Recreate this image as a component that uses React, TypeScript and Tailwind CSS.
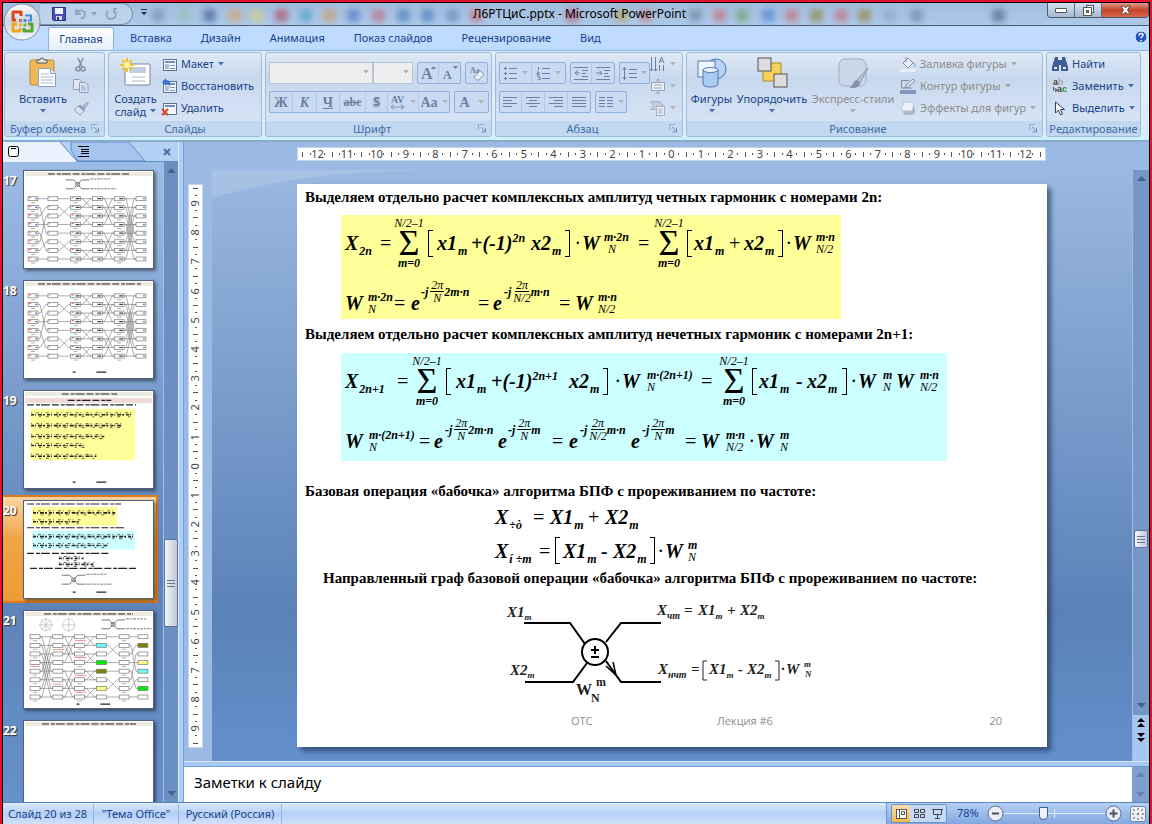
import type { ReactNode } from 'react';

const menuTabs = ['Вставка', 'Дизайн', 'Анимация', 'Показ слайдов', 'Рецензирование', 'Вид'];

function Caret({ className = 'text-[#4a6fae]' }: { className?: string }) {
  return (
    <svg width="6" height="4" viewBox="0 0 6 4" className={`shrink-0 ${className}`} aria-hidden="true">
      <path d="M0 0h6L3 3.5z" fill="currentColor" />
    </svg>
  );
}

/* ---------- ribbon ---------- */

function Group({ title, className, launcher, children }: { title: string; className: string; launcher?: boolean; children: ReactNode }) {
  return (
    <section
      className={`flex flex-col rounded-[3px] border border-[#9dbbdb] bg-linear-to-b from-[#dfe9f6] via-[#c8d8ed] via-30% to-[#dae7f7] overflow-hidden ${className}`}
    >
      <div className="flex h-[68px]">{children}</div>
      <div className="flex flex-1 items-center bg-[#c1d8f0] text-[#3e6aaa]">
        <h2 className="flex-1 text-center whitespace-nowrap leading-none">{title}</h2>
        {launcher && (
          <button aria-label={`${title}: параметры`} className="mr-1">
            <svg width="9" height="9" viewBox="0 0 9 9" fill="none" stroke="#8fabcf">
              <path d="M.5 6V.5H6" />
              <path d="M3 3l4 4M7.5 4v4h-4" stroke="#6d8ebb" />
            </svg>
          </button>
        )}
      </div>
    </section>
  );
}

function SmallButton({ icon, label, caret, disabled }: { icon: ReactNode; label: string; caret?: boolean; disabled?: boolean }) {
  return (
    <button
      disabled={disabled}
      className={`flex h-[22px] items-center gap-1 whitespace-nowrap ${disabled ? 'text-[#8d8d8d]' : 'text-[#15428b]'}`}
    >
      {icon}
      {label}
      {caret && <Caret className={disabled ? 'text-[#a9a9a9]' : 'text-[#4a6fae]'} />}
    </button>
  );
}

function BigButton({ icon, label, second, disabled, className = '' }: { icon: ReactNode; label: string; second?: string; disabled?: boolean; className?: string }) {
  return (
    <button
      disabled={disabled}
      className={`flex flex-col items-center whitespace-nowrap leading-[13px] ${disabled ? 'text-[#8d8d8d]' : 'text-[#15428b]'} ${className}`}
    >
      <span className="flex h-[39px] items-center">{icon}</span>
      {label}
      <span className="flex h-3 items-center gap-1">
        {second}
        <Caret className={disabled ? 'text-[#a9a9a9]' : 'text-[#4a6fae]'} />
      </span>
    </button>
  );
}

function ButtonStrip({ children, className = '' }: { children: ReactNode; className?: string }) {
  return (
    <div className={`flex h-[22px] divide-x divide-[#b4c9e6] rounded-[2px] border border-[#8fb0da] bg-[#c9dbf2] ${className}`}>{children}</div>
  );
}

function Tool({ children, label, className }: { children: ReactNode; label: string; className: string }) {
  return (
    <button aria-label={label} disabled className={`flex items-center justify-center gap-1 text-[#6d7ea3] ${className}`}>
      {children}
    </button>
  );
}

function ClipboardGroup() {
  return (
    <Group title="Буфер обмена" launcher className="w-[101px]">
      <BigButton
        className="w-[76px]"
        label="Вставить"
        icon={
          <svg width="28" height="32" viewBox="0 0 28 32">
            <rect x="1" y="3" width="24" height="25" rx="2" fill="#efb957" stroke="#b98a3c" />
            <path d="M8 6V3h3a2 2 0 0 1 4 0h3v3z" fill="#e8e8e8" stroke="#555" />
            <path d="M9.5 11.5h12l5 5v13h-17z" fill="#fff" stroke="#8ba0c0" />
            <path d="M21.5 11.5v5h5" fill="#dce6f4" stroke="#8ba0c0" />
            <path d="M12 17h8M12 20h12M12 23h12M12 26h12" stroke="#a9b7ce" />
          </svg>
        }
      />
      <div className="-ml-2 flex flex-col">
        <Tool label="Вырезать" className="h-[22px]">
          <svg width="14" height="15" viewBox="0 0 14 15" fill="none" stroke="#8492ae" strokeWidth="1.6">
            <path d="M4 1l4 9M9 1L5 10" />
            <circle cx="4" cy="12" r="2" />
            <circle cx="9" cy="12" r="2" />
          </svg>
        </Tool>
        <Tool label="Копировать" className="h-[22px]">
          <svg width="16" height="14" viewBox="0 0 16 14" fill="#dfe7f3" stroke="#8e9dbb">
            <path d="M.5.5h6l2 2v8h-8z" />
            <path d="M6.5 3.5h6l2.5 2.5v7.5H6.5z" />
            <path d="M8 7h4M8 9h5M8 11h5" />
          </svg>
        </Tool>
        <Tool label="Формат по образцу" className="h-[22px]">
          <svg width="16" height="15" viewBox="0 0 16 15" stroke="#98a5bf">
            <path d="M10 5l4-4 1.5 1.5L12 7z" fill="#b5c0d4" />
            <path d="M7 4l5 4-1 2-6-4z" fill="#8e9bb5" />
            <path d="M5 5l6 5-4 4-6-5z" fill="#dbe2ed" />
          </svg>
        </Tool>
      </div>
    </Group>
  );
}

function LayoutIcon({ kind }: { kind: 'layout' | 'reset' | 'delete' }) {
  return (
    <svg width="15" height="15" viewBox="0 0 15 15" className="shrink-0 overflow-visible">
      <rect x="1.5" y="2.5" width="13" height="11" fill="#f4f8fd" stroke="#5d7299" />
      <path d="M3 5h10" stroke="#6f8fc0" strokeWidth="2" />
      {kind !== 'delete' && <rect x="3" y="7" width="4" height="5" fill="#a9bedd" />}
      {kind !== 'delete' && <path d="M8 8.5h5M8 11.5h5" stroke="#7d93b8" />}
      {kind === 'reset' && <path d="M0 3l4-4v2c4 0 5 3 4 7-1-3-2-3-4-3v2z" fill="#3a72d0" />}
      {kind === 'delete' && <path d="M0 8l6 6M6 8l-6 6" stroke="#e5462c" strokeWidth="2.2" />}
    </svg>
  );
}

function SlidesGroup() {
  return (
    <Group title="Слайды" className="w-[154px]">
      <BigButton
        className="w-[53px]"
        label="Создать"
        second="слайд"
        icon={
          <svg width="32" height="30" viewBox="0 0 32 30">
            <rect x="5" y="6" width="25" height="21" rx="1" fill="#fff" stroke="#7489aa" />
            <rect x="9" y="9" width="17" height="6" fill="#c3cee0" />
            <path d="M12 19h13M12 23h13" stroke="#a9b6cb" />
            <path d="M7 0v14M0 7h14M2 2l10 10M12 2L2 12" stroke="#f2c21d" strokeWidth="2" />
            <circle cx="7" cy="7" r="3" fill="#fff7b0" />
          </svg>
        }
      />
      <div className="flex flex-col">
        <SmallButton icon={<LayoutIcon kind="layout" />} label="Макет" caret />
        <SmallButton icon={<LayoutIcon kind="reset" />} label="Восстановить" />
        <SmallButton icon={<LayoutIcon kind="delete" />} label="Удалить" />
      </div>
    </Group>
  );
}

function FontBox({ label, className }: { label: string; className: string }) {
  return (
    <div className={`relative h-[22px] ${className}`}>
      <select aria-label={label} disabled className="h-full w-full appearance-none border border-[#b3c4da] bg-[#eeeeee]" />
      <span className="absolute right-1 top-2 flex">
        <Caret className="text-[#b3b3b3]" />
      </span>
    </div>
  );
}

function SizeIcon({ up }: { up?: boolean }) {
  return (
    <svg width="16" height="16" viewBox="0 0 16 16" fill="#6d7ea3" fontFamily="Liberation Serif" fontWeight="bold">
      <text x="1" y="14" fontSize={up ? 16 : 12}>A</text>
      <path d={up ? 'M11 4h5l-2.500-3z' : 'M11 1h5l-2.500 3z'} />
    </svg>
  );
}

function FontGroup() {
  return (
    <Group title="Шрифт" launcher className="w-[227px]">
      <div className="flex flex-col gap-[7px] px-[3px] pt-[9px]">
        <div className="flex">
          <FontBox label="Гарнитура" className="w-[104px]" />
          <FontBox label="Размер шрифта" className="w-[40px]" />
          <ButtonStrip className="ml-1">
            <Tool label="Увеличить размер" className="w-[21px]"><SizeIcon up /></Tool>
            <Tool label="Уменьшить размер" className="w-[21px]"><SizeIcon /></Tool>
          </ButtonStrip>
          <ButtonStrip className="ml-1">
            <Tool label="Очистить формат" className="w-[21px]">
              <svg width="16" height="16" viewBox="0 0 16 16">
                <text x="1" y="8" fontSize="8" fontWeight="bold" fill="#6d7ea3" fontFamily="Liberation Serif">Aa</text>
                <path d="M5 12l6-6 4 3-5 6H7z" fill="#e7ebf3" stroke="#8f9cb7" />
              </svg>
            </Tool>
          </ButtonStrip>
        </div>
        <div className="flex gap-1 font-['Liberation_Serif'] text-[14px] font-bold">
          <ButtonStrip>
            <Tool label="Полужирный" className="w-[23px]">Ж</Tool>
            <Tool label="Курсив" className="w-[24px] italic">К</Tool>
            <Tool label="Подчеркнутый" className="w-[23px] underline">Ч</Tool>
            <Tool label="Зачеркнутый" className="w-[26px] text-[12px] line-through">abc</Tool>
            <Tool label="Тень" className="w-[22px] font-['Noto_Sans'] text-[13px] text-shadow-md">S</Tool>
            <Tool label="Интервал" className="w-[31px]">
              <svg width="16" height="15" viewBox="0 0 16 15">
                <text x="1" y="8" fontSize="10" fill="#6d7ea3" fontFamily="Liberation Serif">AV</text>
                <path d="M1 12h13M4 9.5L1 12l3 2.5M11 9.5l3 2.5-3 2.5" stroke="#7f90b3" fill="none" />
              </svg>
              <Caret className="text-[#b3b3b3]" />
            </Tool>
            <Tool label="Регистр" className="w-[30px]">Aa<Caret className="text-[#b3b3b3]" /></Tool>
          </ButtonStrip>
          <ButtonStrip>
            <Tool label="Цвет текста" className="w-[33px]">
              <span className="pr-1">A</span>
              <Caret className="text-[#b3b3b3]" />
            </Tool>
          </ButtonStrip>
        </div>
      </div>
    </Group>
  );
}

function Lines({ d }: { d: string }) {
  return (
    <svg width="15" height="13" viewBox="0 0 15 13" fill="none" stroke="#6d7ea3" aria-hidden="true">
      <path d={d} />
    </svg>
  );
}

function ParagraphGroup() {
  return (
    <Group title="Абзац" launcher className="w-[188px]">
      <div className="flex flex-col gap-[7px] pl-[3px] pt-[9px]">
        <div className="flex gap-1">
          <ButtonStrip>
            <Tool label="Маркеры" className="w-[32px]">
              <Lines d="M1 1.500h3M1 6.500h3M1 11.500h3M6 1.500h8M6 6.500h8M6 11.500h8M2.500 0v3M2.500 5v3M2.500 10v3" />
              <Caret className="text-[#b3b3b3]" />
            </Tool>
            <Tool label="Нумерация" className="w-[33px]">
              <Lines d="M2.500 0v3M1 5h2v1.500H1V8h3M1 10h3v3H1M6 1.500h8M6 6.500h8M6 11.500h8" />
              <Caret className="text-[#b3b3b3]" />
            </Tool>
          </ButtonStrip>
          <ButtonStrip>
            <Tool label="Уменьшить отступ" className="w-[21px]">
              <Lines d="M0 .5h14M8 3.500h6M8 6.500h4M8 9.500h6M0 12.500h14M6 6H1M3.500 3.500L1 6l2.500 2.500" />
            </Tool>
            <Tool label="Увеличить отступ" className="w-[22px]">
              <Lines d="M0 .5h14M8 3.500h6M8 6.500h4M8 9.500h6M0 12.500h14M0 6h6M3.500 3.500L6 6 3.500 8.500" />
            </Tool>
          </ButtonStrip>
          <ButtonStrip>
            <Tool label="Междустрочный интервал" className="w-[29px]">
              <Lines d="M2.500 0v13M.5 3l2-2.500 2 2.500M.5 10l2 2.500 2-2.500M7 2.500h8M7 6.500h8M7 10.500h8" />
              <Caret className="text-[#b3b3b3]" />
            </Tool>
          </ButtonStrip>
        </div>
        <div className="flex gap-1">
          <ButtonStrip>
            <Tool label="По левому краю" className="w-[22px]"><Lines d="M0 1.500h14M0 4.500h9M0 7.500h14M0 10.500h9" /></Tool>
            <Tool label="По центру" className="w-[23px]"><Lines d="M0 1.500h14M3 4.500h8M0 7.500h14M3 10.500h8" /></Tool>
            <Tool label="По правому краю" className="w-[23px]"><Lines d="M0 1.500h14M5 4.500h9M0 7.500h14M5 10.500h9" /></Tool>
            <Tool label="По ширине" className="w-[22px]"><Lines d="M0 1.500h14M0 4.500h14M0 7.500h14M0 10.500h14" /></Tool>
          </ButtonStrip>
          <ButtonStrip>
            <Tool label="Колонки" className="w-[30px]">
              <Lines d="M0 1.500h6M0 4.500h6M0 7.500h6M0 10.500h6M8 1.500h6M8 4.500h6M8 7.500h6M8 10.500h6" />
              <Caret className="text-[#b3b3b3]" />
            </Tool>
          </ButtonStrip>
        </div>
      </div>
      <div className="flex flex-col">
        <Tool label="Направление текста" className="h-[22px]">
          <svg width="16" height="16" viewBox="0 0 16 16" fill="none" stroke="#6d7ea3">
            <path d="M1.500 1v14M5.500 1v14M9.500 9v6M13.500 9v6M0 13l1.500 2L3 13M4 13l1.500 2L7 13" />
            <path d="M9 7l2.500-6L14 7M10 5h3" />
          </svg>
          <Caret className="text-[#b3b3b3]" />
        </Tool>
        <Tool label="Выровнять текст" className="h-[22px]">
          <svg width="16" height="15" viewBox="0 0 16 15" fill="#eef1f6" stroke="#94a1ba">
            <rect x="1.500" y="3.500" width="13" height="8" />
            <path d="M4 6h8M4 9h8M8 0v4M6 2l2-2 2 2M8 11v4M6 13l2 2 2-2" />
          </svg>
          <Caret className="text-[#b3b3b3]" />
        </Tool>
        <Tool label="Преобразовать в SmartArt" className="h-[22px]">
          <svg width="16" height="15" viewBox="0 0 16 15" fill="#c3cad7" stroke="#a6b0c2">
            <path d="M.5.5h9l4 4-4 4h-9l3-4z" />
            <rect x="6.500" y="5.500" width="8" height="9" fill="#eef1f6" />
            <path d="M8 8h5M8 10h5M8 12h5" />
          </svg>
          <Caret className="text-[#b3b3b3]" />
        </Tool>
      </div>
    </Group>
  );
}

function DrawingGroup() {
  return (
    <Group title="Рисование" launcher className="w-[357px]">
      <BigButton
        className="w-[49px]"
        label="Фигуры"
        icon={
          <svg width="30" height="30" viewBox="0 0 30 30" stroke="#4e79b5">
            <circle cx="19" cy="11" r="10" fill="#b9d3f2" />
            <rect x="1" y="3" width="17" height="16" fill="#eef5fd" />
            <path d="M6 12v14c0 4 15 4 15 0V12z" fill="#a8cbf3" />
            <ellipse cx="13.500" cy="12" rx="7.500" ry="2.500" fill="#e8f3fe" />
          </svg>
        }
      />
      <BigButton
        className="w-[72px]"
        label="Упорядочить"
        icon={
          <svg width="31" height="31" viewBox="0 0 31 31">
            <rect x="6" y="6" width="18" height="18" fill="#f6d25c" stroke="#b48a24" />
            <rect x="1" y="1" width="13" height="13" fill="#dcdcdc" stroke="#555" />
            <rect x="17" y="17" width="13" height="13" fill="#dcdcdc" stroke="#555" />
          </svg>
        }
      />
      <BigButton
        disabled
        className="w-[90px]"
        label="Экспресс-стили"
        icon={
          <svg width="31" height="31" viewBox="0 0 31 31">
            <rect x="1" y="2" width="27" height="27" rx="6" fill="#ccd7e8" stroke="#9dadc8" />
            <path d="M30 11L19 23l3 3z" fill="#b3bfd4" stroke="#8e9cb8" />
            <path d="M11 31c4-1 4-8 8-8l3 3c0 5-7 6-11 5z" fill="#8492ae" />
          </svg>
        }
      />
      <div className="flex flex-col pl-[2px]">
        <SmallButton
          disabled
          caret
          label="Заливка фигуры"
          icon={
            <svg width="16" height="15" viewBox="0 0 16 15">
              <path d="M3 6l5-5 5 5-5 5z" fill="#e8edf5" stroke="#8593af" />
              <path d="M6 0v5M13 6c3 1 2 4 1 4" stroke="#8593af" fill="none" />
              <rect y="12" width="16" height="3" fill="#e9eef7" />
            </svg>
          }
        />
        <SmallButton
          disabled
          caret
          label="Контур фигуры"
          icon={
            <svg width="16" height="15" viewBox="0 0 16 15">
              <path d="M9 1.500H1.500V9H12" fill="none" stroke="#7c8bab" />
              <path d="M5 9l1-3 7-6 2 2-7 6z" fill="#e1e7f1" stroke="#7c8bab" />
              <rect y="11" width="16" height="4" fill="#8296bb" />
            </svg>
          }
        />
        <SmallButton
          disabled
          caret
          label="Эффекты для фигур"
          icon={
            <svg width="16" height="15" viewBox="0 0 16 15">
              <rect x="3" y="5" width="12" height="9" rx="4" fill="#aab6cb" />
              <path d="M4 1h8l2 2-2 7H3L1 8z" fill="#eef2f8" stroke="#b9c3d5" />
            </svg>
          }
        />
      </div>
    </Group>
  );
}

function EditingGroup() {
  return (
    <Group title="Редактирование" className="w-[95px]">
      <div className="flex flex-col pl-[5px]">
        <SmallButton
          label="Найти"
          icon={
            <svg width="16" height="14" viewBox="0 0 16 14" fill="#3c5d96">
              <path d="M3 0h3v3h4V0h3l3 10v4H9V8H7v6H0v-4z" />
              <path d="M2 10h3v2H2zM11 10h3v2h-3z" fill="#dfe9f8" />
            </svg>
          }
        />
        <SmallButton
          caret
          label="Заменить"
          icon={
            <svg width="16" height="16" viewBox="0 0 16 16" fontFamily="Liberation Sans" fontWeight="bold" fontSize="9">
              <text x="1" y="7" fill="#444">a<tspan fill="#aaa">b</tspan></text>
              <text x="5" y="14" fill="#444">a<tspan fill="#27922f">c</tspan></text>
              <path d="M1.500 9v3h3M3 10l2 2-2 2" stroke="#3a5a94" fill="none" />
            </svg>
          }
        />
        <SmallButton
          caret
          label="Выделить"
          icon={
            <svg width="16" height="15" viewBox="0 0 16 15">
              <path d="M3.500 1v11l3-3 2 5 2-1-2-4.500h4z" fill="#fff" stroke="#333f5c" />
            </svg>
          }
        />
      </div>
    </Group>
  );
}

/* ---------- title bar ---------- */

const blobs: [number, string][] = [
  [158, '#6f8fb5'], [183, '#8fc3b4'], [209, '#3c5d92'], [234, '#d9a263'], [256, '#d8d07a'], [281, '#b04a5c'], [305, '#4da0c4'],
  [329, '#d39a60'], [353, '#4777c2'], [378, '#c26a80'], [403, '#4a78bf'], [427, '#4a78bf'], [452, '#5f86b5'], [476, '#c96a74'],
  [572, '#c25060'], [621, '#b0a050'], [645, '#c9747c'], [695, '#6b84a0'], [719, '#c96a74'], [742, '#69a36a'], [768, '#4a7fd0'],
  [791, '#c96a74'], [816, '#8d8339'], [841, '#c96a74'], [864, '#8d8339'], [889, '#8aa5c4'], [916, '#6b84a8'], [998, '#4a6486'],
];

function TitleBar() {
  return (
    <header className="relative flex h-[22px] items-start bg-linear-to-b from-[#a3bddc] to-[#adc9ea]">
      <svg className="absolute inset-0 h-full w-full blur-[3px]" aria-hidden="true">
        {blobs.map(([x, fill]) => (
          <rect key={x} x={x - 9} y="6" width="13" height="13" rx="4" fill={fill} opacity="0.65" />
        ))}
      </svg>
      <div className="relative ml-[37px] flex h-[22px] w-[93px] items-center gap-2 rounded-r-full border border-l-0 border-[#7f93ae] bg-[#c5d8ee]/70 pl-3">
        <button aria-label="Сохранить">
          <svg width="14" height="14" viewBox="0 0 14 14">
            <path d="M.5.5h13v13h-12l-1-1z" fill="#4a4fb5" stroke="#2d3180" />
            <rect x="3" y="1" width="8" height="6" fill="#eef2fb" />
            <rect x="4" y="9" width="6" height="4" fill="#d5d9ee" />
            <rect x="5" y="10" width="2" height="3" fill="#2d3180" />
          </svg>
        </button>
        <button aria-label="Отменить" disabled className="flex items-center gap-1">
          <svg width="13" height="12" viewBox="0 0 13 12" fill="none" stroke="#8fa6c5" strokeWidth="2">
            <path d="M2 1v5h5M2 6c3-5 9-4 9 0 0 3-2 4-4 5" />
          </svg>
          <Caret className="text-[#8a9bb5]" />
        </button>
        <button aria-label="Повторить" disabled>
          <svg width="13" height="12" viewBox="0 0 13 12" fill="none" stroke="#8fa6c5" strokeWidth="2">
            <path d="M3 3c-3 3-1 8 3 8 5 0 6-6 3-8M8 1h4M9 1v4" />
          </svg>
        </button>
      </div>
      <button aria-label="Настройка панели быстрого доступа" className="relative ml-2 mt-[6px]">
        <svg width="7" height="7" viewBox="0 0 7 7" fill="#1e2f55">
          <path d="M0 0h6v1H0zM0 3h6L3 6z" />
        </svg>
      </button>
      <h1 className="relative flex-1 pl-[325px] pt-[2px] text-[12px] leading-[18px] text-black">Л6РТЦиС.pptx - Microsoft PowerPoint</h1>
      <div className="relative flex h-[15px] overflow-hidden rounded-b-[4px] border border-t-0 border-[#4b5a70]">
        <button aria-label="Свернуть" className="flex w-[27px] items-center justify-center border-r border-[#5d6f88] bg-linear-to-b from-[#d8e2ee] to-[#a4b8d0]">
          <span className="h-[5px] w-3 rounded-[1px] border border-[#555] bg-white" />
        </button>
        <button aria-label="Восстановить окно" className="flex w-[27px] items-center justify-center border-r border-[#5d6f88] bg-linear-to-b from-[#d8e2ee] to-[#a4b8d0]">
          <svg width="11" height="11" viewBox="0 0 11 11" fill="#fff" stroke="#555">
            <rect x="3.500" y=".5" width="7" height="7" />
            <rect x=".5" y="2.500" width="8" height="8" />
            <rect x="3.500" y="5.500" width="2" height="2" fill="#8898ae" />
          </svg>
        </button>
        <button aria-label="Закрыть" className="flex w-[46px] items-center justify-center bg-linear-to-b from-[#e09a86] via-[#c5422a] to-[#d8684a]">
          <svg width="11" height="10" viewBox="0 0 11 10">
            <path d="M1 1h3l1.500 2L7 1h3L7.500 5 10 9H7L5.500 7 4 9H1l2.500-4z" fill="#fff" stroke="#6a4040" />
          </svg>
        </button>
      </div>
      <button aria-label="Кнопка Office" className="absolute left-0 top-0 z-10">
        <svg width="38" height="38" viewBox="0 0 38 38" fill="none">
          <defs>
            <linearGradient id="orb" x1="0" y1="0" x2="0" y2="1">
              <stop offset="0" stopColor="#fbfcfe" />
              <stop offset=".5" stopColor="#cdd6e4" />
              <stop offset="1" stopColor="#f8fafd" />
            </linearGradient>
          </defs>
          <circle cx="19" cy="19" r="18" fill="url(#orb)" stroke="#7f8fa8" />
          <path d="M13 17h-3V9h8v4" stroke="#d9481c" strokeWidth="3" strokeLinejoin="round" />
          <path d="M22 12.500h6v5h-3" stroke="#3f8fd8" strokeWidth="2" strokeLinejoin="round" />
          <path d="M14 21h-4v7h7v-3" stroke="#f0a818" strokeWidth="3" strokeLinejoin="round" />
          <path d="M21 25v3h8v-7h-4" stroke="#58a832" strokeWidth="3" strokeLinejoin="round" />
          <path d="M16 16h3v3h-3z" fill="#e86a28" />
          <path d="M20.500 16h3v3h-3z" fill="#3f8fd8" />
          <path d="M16 20.500h3v3h-3z" fill="#f0b820" />
          <path d="M20.500 20.500h3v3h-3z" fill="#6cb840" />
        </svg>
      </button>
    </header>
  );
}

/* ---------- slide thumbnails ---------- */

type Link = [number, number];

const straight: Link[] = [0, 1, 2, 3, 4, 5, 6, 7].map((r) => [r, r]);
const reversal: Link[] = [[0, 0], [1, 4], [2, 1], [3, 3], [4, 6], [5, 2], [6, 5], [7, 7]];
const butterflies = (span: number): Link[] => straight.flatMap(([r]) => [[r, r], [r, r ^ span]] as Link[]);
const swapInner: Link[] = [[0, 0], [1, 2], [2, 1], [3, 3], [4, 4], [5, 6], [6, 5], [7, 7]];

function FlowGraph({ top, columns, stages, fills = {} }: { top: number; columns: number[]; stages: Link[][]; fills?: Record<string, string> }) {
  const y = (row: number) => top + row * 8.7;
  return (
    <g>
      {stages.map((links, c) =>
        links.map(([a, b], i) => {
          const x1 = columns[c] + 10;
          const x2 = columns[c + 1];
          return <path key={`${c}-${i}`} d={`M${x1} ${y(a)}h2L${x2 - 2} ${y(b)}h2`} fill="none" stroke="#777" strokeWidth=".6" />;
        }),
      )}
      {columns.map((x, c) =>
        straight.map(([r]) => (
          <g key={`${c}-${r}`}>
            <rect x={x} y={y(r) - 2} width="10" height="4" fill={fills[`${c}-${r}`] ?? '#fff'} stroke="#777" strokeWidth=".7" />
            {c % 2 === 0 && <path d={`M${x + 3} ${y(r) + 4}h4`} stroke="#999" strokeWidth=".8" />}
          </g>
        )),
      )}
    </g>
  );
}

// red and blue index marks inside the outer boxes
function IndexMarks({ top }: { top: number }) {
  return (
    <g strokeWidth="1.2">
      {straight.map(([r]) => (
        <g key={r}>
          <path d={`M5 ${top + r * 8.7 - 1}h2M25 ${top + r * 8.7 - 1}h1M48 ${top + r * 8.7 - 1}h2`} stroke="#f06a6a" />
          <path d={`M11 ${top + r * 8.7}h2M120 ${top + r * 8.7}h2`} stroke="#6a6af0" />
          <path d={`M52 ${top + r * 8.7}h4M74 ${top + r * 8.7}h4M96 ${top + r * 8.7}h4`} stroke="#444" />
        </g>
      ))}
    </g>
  );
}

function MiniText({ x, y, width, dash = '7 2 4 1 9 2' }: { x: number; y: number; width: number; dash?: string }) {
  return <path d={`M${x} ${y}h${width}`} stroke="#222" strokeWidth="1.2" strokeDasharray={dash} />;
}

function MiniFormula({ x, y, width }: { x: number; y: number; width: number }) {
  return (
    <g stroke="#222">
      <path d={`M${x} ${y}h${width}`} strokeWidth="1.6" strokeDasharray="3 1 1 2 4 1 2 2" />
      <path d={`M${x} ${y - 2}h${width}`} strokeWidth=".7" strokeDasharray="1 4 3 2" />
      <path d={`M${x + 8} ${y + 2}h${width - 8}`} strokeWidth=".7" strokeDasharray="2 5 3 8" />
    </g>
  );
}

function MiniButterfly({ x, y }: { x: number; y: number }) {
  return (
    <g fill="none" stroke="#666" strokeWidth=".9">
      <path d={`M${x} ${y}h8l8 9h8M${x} ${y + 9}h8l8-9h8`} />
      <circle cx={x + 12} cy={y + 4.5} r="2" />
      <path d={`M${x + 25} ${y - 1}h20M${x + 25} ${y + 9}h26`} strokeDasharray="3 1 2 1" />
    </g>
  );
}

const header = <rect x="1" y="1" width="128" height="4" fill="#ecebe0" />;
const graphColumns = [4, 24, 47, 69, 91, 113];
const graphStages = [reversal, swapInner, butterflies(1), butterflies(2), butterflies(4)];

const thumbs: { n: number; art: ReactNode }[] = [
  {
    n: 17,
    art: (
      <>
        {header}
        <MiniText x={24} y={3} width={84} />
        <MiniButterfly x={42} y={9} />
        <FlowGraph top={28} columns={graphColumns} stages={graphStages} />
        <IndexMarks top={28} />
      </>
    ),
  },
  {
    n: 18,
    art: (
      <>
        {header}
        <MiniText x={14} y={3} width={104} />
        <FlowGraph top={15} columns={graphColumns} stages={graphStages} />
        <IndexMarks top={15} />
        <MiniText x={49} y={92} width={34} dash="3 21 10 2" />
      </>
    ),
  },
  {
    n: 19,
    art: (
      <>
        {header}
        <MiniText x={38} y={3} width={56} />
        <rect x="1" y="7" width="128" height="5" fill="#efd9d9" />
        <MiniText x={44} y={9.5} width={44} />
        <MiniText x={3} y={14} width={110} />
        <rect x="6" y="18" width="106" height="52" fill="#ffff99" />
        <MiniFormula x={7} y={24} width={103} />
        <MiniFormula x={7} y={35} width={92} />
        <MiniFormula x={7} y={46} width={74} />
        <MiniFormula x={7} y={55} width={54} />
        <MiniFormula x={7} y={66} width={66} />
        <MiniText x={49} y={92} width={72} dash="3 21 10 38" />
      </>
    ),
  },
  {
    n: 20,
    art: (
      <>
        <MiniText x={3} y={3} width={95} />
        <rect x="8" y="6" width="86" height="19" fill="#ffff99" />
        <MiniFormula x={9} y={12} width={83} />
        <MiniFormula x={9} y={21} width={48} />
        <MiniText x={3} y={27} width={100} />
        <rect x="8" y="30" width="104" height="19" fill="#ccffff" />
        <MiniFormula x={9} y={36} width={101} />
        <MiniFormula x={9} y={45} width={76} />
        <MiniText x={3} y={53} width={84} />
        <MiniFormula x={35} y={58} width={25} />
        <MiniFormula x={35} y={64} width={36} />
        <MiniText x={6} y={68} width={108} />
        <MiniButterfly x={38} y={75} />
        <MiniText x={49} y={92} width={72} dash="3 21 10 38" />
      </>
    ),
  },
  {
    n: 21,
    art: (
      <>
        {header}
        <MiniText x={20} y={3} width={90} />
        <g fill="none" stroke="#bbb" strokeWidth=".7">
          <circle cx="22" cy="14" r="6" />
          <path d="M15 14h14M22 7v14M17 9l10 10M27 9L17 19" />
          <circle cx="45" cy="14" r="6" />
          <path d="M38 14h14M45 7v14" />
        </g>
        <MiniButterfly x={78} y={9} />
        <FlowGraph
          top={26}
          columns={[6, 29, 51, 73, 96, 115]}
          stages={[butterflies(4), butterflies(2), butterflies(1), swapInner, reversal]}
          fills={{
            '3-1': '#66ffff', '3-3': '#00ee00', '3-4': '#808000', '3-6': '#ffff80',
            '5-1': '#808000', '5-3': '#ffff80', '5-4': '#66ffff', '5-6': '#00ee00',
          }}
        />
        <path d="M29 39h12M51 30h12M51 47h12M6 56h10M51 65h12M29 74h10M51 82h12" stroke="#f19a9a" />
        <MiniText x={53} y={94} width={36} dash="3 21 10 2" />
      </>
    ),
  },
  {
    n: 22,
    art: (
      <>
        {header}
        <MiniText x={18} y={3} width={95} />
      </>
    ),
  },
];

function Arrow({ up, className = 'text-[#46618f]' }: { up?: boolean; className?: string }) {
  return (
    <svg width="9" height="5" viewBox="0 0 9 5" className={className} aria-hidden="true">
      <path d={up ? 'M0 5h9L4.500 0z' : 'M0 0h9L4.500 5z'} fill="currentColor" />
    </svg>
  );
}

function Grip() {
  return (
    <>
      <span className="h-px w-2 bg-[#66758f]" />
      <span className="h-px w-2 bg-[#66758f]" />
      <span className="h-px w-2 bg-[#66758f]" />
    </>
  );
}

function SlidesPane() {
  return (
    <aside className="flex w-[175px] shrink-0 flex-col">
      <div className="relative flex h-[20px] items-center border-b border-[#5d8fc8] bg-[#b3d0f5]">
        <svg className="absolute left-0 top-0" width="150" height="20" viewBox="0 0 150 20" aria-hidden="true">
          <path d="M68 0h58l16 19H75L68 8z" fill="#a6c5ee" stroke="#5d8fc8" />
          <path d="M0 0h57l17 20H0z" fill="#eaf2fd" />
          <path d="M57 0l17 19" stroke="#4f86c6" />
        </svg>
        <button aria-label="Слайды" className="relative w-[70px] pl-[5px]">
          <svg width="11" height="11" viewBox="0 0 11 11" fill="#fff" stroke="#000">
            <rect x=".5" y=".5" width="10" height="10" rx="2" />
            <path d="M3 2.500h5" />
          </svg>
        </button>
        <button aria-label="Структура" className="relative w-[80px] pl-[5px]">
          <svg width="11" height="11" viewBox="0 0 11 11" stroke="#000">
            <path d="M0 .5h11M3 3.500h8M3 5.500h8M3 7.500h8M0 10.500h11" />
          </svg>
        </button>
        <button aria-label="Закрыть панель" className="relative pl-[10px]">
          <svg width="8" height="8" viewBox="0 0 8 8" stroke="#3f6ea8" strokeWidth="1.8">
            <path d="M1 1l6 6M7 1L1 7" />
          </svg>
        </button>
      </div>
      <div className="flex min-h-0 flex-1 bg-linear-to-b from-[#9dbce5] via-[#5d83b8] via-65% to-[#6690cc]">
        <ol className="min-w-0 flex-1 overflow-hidden pt-[3px]">
          {thumbs.map(({ n, art }) => (
            <li
              key={n}
              className={`mr-[5px] flex h-[108px] mb-[2px] border-2 border-l-0 pt-[3px] ${
                n === 20 ? 'border-[#e07a1c] bg-linear-to-b from-[#fbd6a2] via-[#f0a544] via-40% to-[#ee9a34]' : 'border-transparent'
              }`}
            >
              <span className="w-[20px] pt-1 text-[12px] font-bold leading-[14px] text-white text-shadow-[1px_1px_1px_#333]">{n}</span>
              <svg
                width="131"
                height="99"
                viewBox="0 0 130 98"
                className="shrink-0 border border-[#54617a] bg-white shadow-[2px_2px_3px_rgba(0,0,0,0.45)]"
              >
                {art}
              </svg>
            </li>
          ))}
        </ol>
        <div className="flex w-[15px] flex-col items-center border-l border-[#9fbfe9] bg-[#6c8fc2] py-[6px]">
          <Arrow up />
          <div className="mt-[366px] flex h-[88px] w-[14px] flex-col items-center justify-center gap-[2px] rounded-[2px] border border-[#5b739b] bg-linear-to-r from-[#f3f5f9] to-[#bfcadb]">
            <Grip />
          </div>
          <span className="flex-1" />
          <Arrow />
        </div>
      </div>
    </aside>
  );
}

/* ---------- rulers ---------- */

// quarter-unit steps: number, dot, half mark, dot
function rulerMarks(quarters: number) {
  const marks: string[] = [];
  for (let q = -quarters; q <= quarters; q++) {
    const step = Math.abs(q) % 4;
    marks.push(step === 0 ? String(Math.abs(q) / 4) : step === 2 ? '|' : '·');
  }
  return marks;
}

function Mark({ text, vertical }: { text: string; vertical?: boolean }) {
  if (text === '|') return <i className={vertical ? 'h-px w-[5px] bg-[#555]' : 'h-[5px] w-px bg-[#555]'} />;
  if (text === '·') return <i className={vertical ? 'h-px w-[2px] bg-[#555]' : 'h-[2px] w-px bg-[#555]'} />;
  return <span className={vertical ? '-rotate-90' : ''}>{text}</span>;
}

function HorizontalRuler() {
  return (
    <div className="ml-[28px] mr-[18px] flex h-[28px] justify-center pt-[5px]">
      <div className="flex h-[14px] w-[749px] border border-[#c3d6ef] bg-white px-px text-[11px] text-[#444]">
        {rulerMarks(50).map((m, i) => (
          <div key={i} className="flex w-0 flex-1 items-center justify-center">
            <Mark text={m} />
          </div>
        ))}
      </div>
    </div>
  );
}

function VerticalRuler() {
  return (
    <div className="w-[28px] bg-[#9bbae3] pl-1 pt-[14px]">
      <div className="flex h-[564px] w-[15px] flex-col border border-[#c3d6ef] bg-white text-[11px] text-[#444]">
        {rulerMarks(38).map((m, i) => (
          <div key={i} className="flex h-0 flex-1 items-center justify-center">
            <Mark text={m} vertical />
          </div>
        ))}
      </div>
    </div>
  );
}

/* ---------- equations ---------- */

function Eq({ cols, children }: { cols: string; children: ReactNode }) {
  return <div className={`grid items-center whitespace-nowrap text-[20px] font-bold italic leading-6 ${cols}`}>{children}</div>;
}

// base letter with an optional lower or upper index
function V({ children, sub, sup }: { children: ReactNode; sub?: string; sup?: string }) {
  return (
    <span>
      {children}
      {sub && <sub className="static pl-px align-[-5px] text-[12px] leading-0">{sub}</sub>}
      {sup && <sup className="static align-[8px] text-[12px] leading-0">{sup}</sup>}
    </span>
  );
}

function Sign({ children }: { children: string }) {
  return <span className="font-normal not-italic">{children}</span>;
}

function Stack({ top, bottom, indent }: { top: string; bottom: string; indent?: boolean }) {
  return (
    <span className="flex flex-col text-[12px] leading-3">
      <span>{top}</span>
      <span className={`font-normal ${indent ? 'pl-1' : ''}`}>{bottom}</span>
    </span>
  );
}

function Sum() {
  return (
    <span className="flex w-[30px] flex-col items-center text-[12px] leading-3">
      <span className="font-normal">N/2–1</span>
      <span className="text-[36px] font-normal not-italic leading-7">Σ</span>
      <span>m=0</span>
    </span>
  );
}

function Open() {
  return <span className="h-[27px] w-[5px] border-y border-l border-black" />;
}

function Close() {
  return <span className="h-[27px] w-[5px] border-y border-r border-black" />;
}

function Power({ over, tail }: { over: string; tail: string }) {
  return (
    <span className="mb-[22px] flex items-center text-[12px] leading-3">
      -j
      <span className="ml-[2px] flex flex-col items-center font-normal">
        <span className="border-b border-black px-px">2π</span>
        <span>{over}</span>
      </span>
      {tail}
    </span>
  );
}

function W() {
  return (
    <span>
      <span className="pr-[2px] font-normal">·</span>W
    </span>
  );
}

function Butterfly() {
  return (
    <svg
      width="330"
      height="110"
      viewBox="500 598 330 110"
      fontFamily="'Liberation Serif', serif"
      fontSize="15"
      fontWeight="bold"
      fontStyle="italic"
      fill="#222"
      role="img"
      aria-label="Граф операции бабочка"
    >
      <g fill="none" stroke="#000" strokeWidth="2">
        <path d="M524 623h46l15 21M606 642l15-19h40M525 682h48l14-19M606 661l15 21h40" />
        <circle cx="595" cy="652" r="13" fill="#fff" />
        <path d="M606 666l10 9-3-13" strokeWidth="1.5" />
        <path d="M591 650h8M595 646v8M591 657h8" />
      </g>
      <text x="507" y="617">X1<tspan dy="3" fontSize="9">m</tspan></text>
      <text x="510" y="675">X2<tspan dy="3" fontSize="9">m</tspan></text>
      <text x="576" y="695" fontStyle="normal" fontSize="16">W</text>
      <text x="596" y="686" fontStyle="normal" fontSize="12">m</text>
      <text x="591" y="702" fontStyle="normal" fontSize="12">N</text>
      <text x="657" y="615">
        X<tspan dy="4" fontSize="10">чт</tspan>
        <tspan x="684" dy="-4">=</tspan>
        <tspan x="698">X1</tspan><tspan dy="4" fontSize="9">m</tspan>
        <tspan x="727" dy="-4">+</tspan>
        <tspan x="740">X2</tspan><tspan dy="4" fontSize="9">m</tspan>
      </text>
      <text x="658" y="674">
        X<tspan dy="4" fontSize="10">нчт</tspan>
        <tspan x="691" dy="-4">=</tspan>
        <tspan x="709">X1</tspan><tspan dy="4" fontSize="9">m</tspan>
        <tspan x="738" dy="-4">-</tspan>
        <tspan x="747">X2</tspan><tspan dy="4" fontSize="9">m</tspan>
        <tspan x="781" dy="-4">·</tspan>
        <tspan x="786">W</tspan>
        <tspan x="804" dy="-7" fontSize="9">m</tspan>
        <tspan x="805" dy="10" fontSize="9">N</tspan>
      </text>
      <path d="M707 661h-4v19h4M775 661h4v19h-4" fill="none" stroke="#222" />
    </svg>
  );
}

function Slide() {
  return (
    <article className="relative mt-[14px] flex h-[563px] w-[750px] shrink-0 flex-col bg-white font-['Liberation_Serif',serif] text-black shadow-[4px_4px_5px_rgba(20,40,80,0.6)]">
      <h3 className="h-[31px] pl-2 pt-1 text-[15px] font-bold leading-[18px]">Выделяем отдельно расчет комплексных амплитуд четных гармоник с номерами 2n:</h3>
      <div className="ml-[44px] flex h-[104px] w-[500px] flex-col gap-[10px] bg-[#ffff99] pl-1 pt-[2px]">
        <Eq cols="grid-cols-[35px_14px_34px_9px_34px_60px_34px_10px_29px_34px_16px_33px_7px_35px_15px_34px_8px_30px_25px]">
          <V sub="2n">X</V><Sign>=</Sign><Sum /><Open /><V sub="m">x1</V><V sup="2n">+(-1)</V><V sub="m">x2</V><Close /><W />
          <Stack top="m·2n" bottom="N" indent /><Sign>=</Sign><Sum /><Open /><V sub="m">x1</V><Sign>+</Sign><V sub="m">x2</V><Close /><W />
          <Stack top="m·n" bottom="N/2" />
        </Eq>
        <Eq cols="grid-cols-[23px_26px_17px_10px_57px_15px_11px_55px_16px_23px_1fr]">
          <V>W</V><Stack top="m·2n" bottom="N" /><Sign>=</Sign><V>e</V><Power over="N" tail="2m·n" /><Sign>=</Sign><V>e</V>
          <Power over="N/2" tail="m·n" /><Sign>=</Sign><V>W</V><Stack top="m·n" bottom="N/2" />
        </Eq>
      </div>
      <h3 className="h-[34px] pl-2 pt-[6px] text-[15px] font-bold leading-[18px]">Выделяем отдельно расчет комплексных амплитуд нечетных гармоник с номерами 2n+1:</h3>
      <div className="ml-[44px] flex h-[108px] w-[606px] flex-col gap-[10px] bg-[#ccffff] pl-1 pt-[2px]">
        <Eq cols="grid-cols-[52px_15px_34px_10px_35px_78px_34px_12px_32px_54px_18px_33px_7px_37px_11px_35px_9px_32px_13px_24px_27px]">
          <V sub="2n+1">X</V><Sign>=</Sign><Sum /><Open /><V sub="m">x1</V><V sup="2n+1">+(-1)</V><V sub="m">x2</V><Close /><W />
          <Stack top="m·(2n+1)" bottom="N" /><Sign>=</Sign><Sum /><Open /><V sub="m">x1</V><V>-</V><V sub="m">x2</V><Close /><W />
          <Stack top="m" bottom="N" /><V>W</V><Stack top="m·n" bottom="N/2" />
        </Eq>
        <Eq cols="grid-cols-[24px_50px_15px_11px_53px_10px_44px_17px_11px_51px_11px_43px_16px_25px_23px_31px_1fr]">
          <V>W</V><Stack top="m·(2n+1)" bottom="N" /><Sign>=</Sign><V>e</V><Power over="N" tail="2m·n" /><V>e</V><Power over="N" tail="m" />
          <Sign>=</Sign><V>e</V><Power over="N/2" tail="m·n" /><V>e</V><Power over="N" tail="m" /><Sign>=</Sign><V>W</V>
          <Stack top="m·n" bottom="N/2" /><W /><Stack top="m" bottom="N" />
        </Eq>
      </div>
      <h3 className="h-[44px] pl-2 pt-[21px] text-[15px] font-bold leading-[18px]">Базовая операция «бабочка» алгоритма БПФ с прореживанием по частоте:</h3>
      <div className="flex h-[64px] flex-col gap-1 pl-[198px]">
        <Eq cols="grid-cols-[38px_17px_38px_17px_1fr]">
          <V sub="÷ò">X</V><Sign>=</Sign><V sub="m">X1</V><Sign>+</Sign><V sub="m">X2</V>
        </Eq>
        <Eq cols="grid-cols-[44px_16px_8px_38px_12px_37px_8px_30px_1fr] pt-1">
          <V sub="í ÷m">X</V><Sign>=</Sign><Open /><V sub="m">X1</V><V>-</V><V sub="m">X2</V><Close /><W /><Stack top="m" bottom="N" />
        </Eq>
      </div>
      <h3 className="h-[25px] pl-[26px] text-[15px] font-bold leading-[18px]">Направленный граф базовой операции «бабочка» алгоритма БПФ с прореживанием по частоте:</h3>
      <div className="ml-[203px] mt-1">
        <Butterfly />
      </div>
      <footer className="mt-1 flex justify-between pl-[274px] pr-[45px] font-['Open_Sans'] text-[11px] leading-[18px] text-[#8b8b8b]">
        <span>ОТС</span>
        <span className="mr-[92px]">Лекция #6</span>
        <span>20</span>
      </footer>
    </article>
  );
}

/* ---------- editor ---------- */

function Editor() {
  return (
    <main className="flex min-w-0 flex-1 flex-col bg-[#9bbae3]">
      <HorizontalRuler />
      <div className="flex min-h-0 flex-1">
        <VerticalRuler />
        <div className="relative flex min-w-0 flex-1 justify-center overflow-hidden bg-linear-to-b from-[#9ab8e0] via-[#5b82b8] via-75% to-[#648fcb]">
          <svg className="absolute left-0 top-0" width="300" height="60" aria-hidden="true">
            <path d="M0 28C60 10 120 2 220 0H0z" fill="#fff" opacity="0.14" />
          </svg>
          <Slide />
        </div>
        <div className="flex w-[17px] flex-col items-center border-l border-[#9fbfe9] bg-[#7696c6] pt-[6px]">
          <Arrow up />
          <div className="mt-[349px] flex h-[18px] w-[14px] flex-col items-center justify-center gap-[2px] rounded-[2px] border border-[#5b739b] bg-linear-to-r from-[#f3f5f9] to-[#bfcadb]">
            <Grip />
          </div>
          <span className="flex-1" />
          <Arrow />
          <div className="mt-[7px] flex h-[46px] w-full flex-col items-center gap-[6px] bg-[#a9c6ef] pt-[3px] text-black">
            <button aria-label="Предыдущий слайд">
              <svg width="8" height="9" viewBox="0 0 8 9"><path d="M0 4h8L4 0zM0 9h8L4 5z" /></svg>
            </button>
            <button aria-label="Следующий слайд">
              <svg width="8" height="9" viewBox="0 0 8 9"><path d="M0 0h8L4 4zM0 5h8L4 9z" /></svg>
            </button>
          </div>
        </div>
      </div>
      <div className="h-[6px] border-b border-t border-t-[#d6e6fb] border-b-[#6f9fdb] bg-[#a9c9f4]" />
      <div className="flex h-[35px]">
        <textarea
          aria-label="Заметки"
          defaultValue="Заметки к слайду"
          className="min-w-0 flex-1 resize-none overflow-hidden bg-white pl-[10px] pt-1 text-[15px] leading-[22px] text-black outline-none"
        />
        <div className="flex w-[17px] flex-col items-center justify-between bg-[#7f9ecd] py-[5px]">
          <Arrow up className="text-[#6c7fa6]" />
          <Arrow className="text-[#6c7fa6]" />
        </div>
      </div>
    </main>
  );
}

/* ---------- status bar ---------- */

function StatusBar() {
  return (
    <footer className="flex h-[22px] shrink-0 items-center border-t border-[#5685bf] bg-linear-to-b from-[#dce9fb] via-[#b5d0f6] to-[#cfe1fb] text-[#15428b]">
      <span className="w-[91px] border-r border-[#94b6e2] pl-[5px] leading-5">Слайд 20 из 28</span>
      <span className="w-[85px] border-r border-[#94b6e2] text-center leading-5">"Тема Office"</span>
      <button className="w-[103px] border-r border-[#94b6e2] leading-5">Русский (Россия)</button>
      <div className="ml-auto flex h-full items-center border-l border-[#6f97cf] bg-linear-to-b from-[#b5d0f5] to-[#82a8e0] pl-1 pr-[3px]">
        <div className="flex h-[19px] rounded-[2px] border border-[#6d8fc4]">
          <button aria-label="Обычный" className="flex w-[18px] items-center justify-center bg-linear-to-b from-[#fbdfae] to-[#f5b942]">
            <svg width="11" height="10" viewBox="0 0 11 10" fill="#fff" stroke="#555">
              <rect x=".5" y=".5" width="10" height="9" />
              <path d="M3.500 0v10M5.500 2.500h3v3h-3z" />
            </svg>
          </button>
          <button aria-label="Сортировщик слайдов" className="flex w-[18px] items-center justify-center bg-[#c4d9f6]">
            <svg width="11" height="9" viewBox="0 0 11 9" fill="none" stroke="#444">
              <path d="M.5.5h4v3h-4zM6.500.5h4v3h-4zM.5 5.500h4v3h-4zM6.500 5.500h4v3h-4z" />
            </svg>
          </button>
          <button aria-label="Показ слайдов" className="flex w-[18px] items-center justify-center bg-[#c4d9f6]">
            <svg width="11" height="10" viewBox="0 0 11 10" fill="none" stroke="#444">
              <path d="M0 .5h11M1.500 1v4.500h8V1M5.500 6v3M3 9.500h5" />
            </svg>
          </button>
        </div>
        <button className="ml-[10px] w-[26px] text-left">78%</button>
        <button aria-label="Уменьшить" className="ml-1">
          <svg width="17" height="17" viewBox="0 0 17 17">
            <circle cx="8.500" cy="8.500" r="7.500" fill="#e8edf5" stroke="#5c6f90" />
            <path d="M5 8.500h7" stroke="#4b4f59" strokeWidth="2" />
          </svg>
        </button>
        <input
          type="range"
          aria-label="Масштаб"
          min={10}
          max={400}
          defaultValue={158}
          className="h-4 w-[101px] appearance-none bg-[linear-gradient(#e4eefb,#e4eefb),linear-gradient(#e4eefb,#e4eefb)] bg-[length:100%_1px,1px_9px] bg-center bg-no-repeat [&::-webkit-slider-thumb]:h-[13px] [&::-webkit-slider-thumb]:w-[9px] [&::-webkit-slider-thumb]:appearance-none [&::-webkit-slider-thumb]:rounded-b-[4px] [&::-webkit-slider-thumb]:border [&::-webkit-slider-thumb]:border-[#3f5f92] [&::-webkit-slider-thumb]:bg-[#eef3fa]"
        />
        <button aria-label="Увеличить">
          <svg width="17" height="17" viewBox="0 0 17 17">
            <circle cx="8.500" cy="8.500" r="7.500" fill="#e8edf5" stroke="#5c6f90" />
            <path d="M4.500 8.500h8M8.500 4.500v8" stroke="#4b4f59" strokeWidth="2" />
          </svg>
        </button>
        <button aria-label="По размеру окна" className="ml-2">
          <svg width="16" height="16" viewBox="0 0 16 16" stroke="#555" fill="none">
            <rect x=".5" y=".5" width="15" height="15" rx="2" fill="#eef2f8" stroke="#7488ab" />
            <path d="M3 3l2 2M13 3l-2 2M3 13l2-2M13 13l-2-2M8 2v2M8 12v2M2 8h2M12 8h2M7 8h2M8 7v2" />
          </svg>
        </button>
      </div>
    </footer>
  );
}

export default function App() {
  return (
    <div className="h-screen border-x-2 border-t-2 border-[#e8112d] font-['Noto_Sans',sans-serif] text-[11px]">
      <div className="flex h-full flex-col overflow-hidden border-x border-t border-black bg-[#bfdbff]">
        <TitleBar />
        <nav className="flex h-[25px] shrink-0 items-end border-t border-[#4b5a70] bg-[#bfdbff] pl-[45px] text-[#15428b]">
          <button className="h-[23px] w-[66px] rounded-t-[3px] border border-b-0 border-[#8db2e3] bg-linear-to-b from-white to-[#e4eefb]">Главная</button>
          <div className="flex h-[23px] flex-1 gap-[29px] pl-4">
            {menuTabs.map((tab) => (
              <button key={tab}>{tab}</button>
            ))}
          </div>
          <button aria-label="Справка" className="mb-[6px] mr-[1px]">
            <svg width="14" height="14" viewBox="0 0 14 14">
              <circle cx="7" cy="7" r="6" fill="#2457c5" stroke="#e8f0fc" />
              <path d="M5 5.500c0-3 4-2.500 4-.5C9 6.500 7 6.500 7 8.300M7 10v1.500" stroke="#fff" strokeWidth="1.5" fill="none" />
            </svg>
          </button>
        </nav>
        <div className="flex h-[88px] shrink-0 gap-[3px] border-t border-[#8db2e3] bg-linear-to-b from-[#e2ecf8] to-[#dcebfb] pb-px pl-px pt-px">
          <ClipboardGroup />
          <SlidesGroup />
          <FontGroup />
          <ParagraphGroup />
          <DrawingGroup />
          <EditingGroup />
        </div>
        <div className="h-1 shrink-0 border-t-2 border-[#c3f6ff] bg-[#8fa9cc]" />
        <div className="flex min-h-0 flex-1">
          <SlidesPane />
          <div className="w-[6px] shrink-0 border-x border-l-[#dceafc] border-r-[#6f9fdb] bg-[#b0cff8]" />
          <Editor />
        </div>
        <StatusBar />
      </div>
    </div>
  );
}
